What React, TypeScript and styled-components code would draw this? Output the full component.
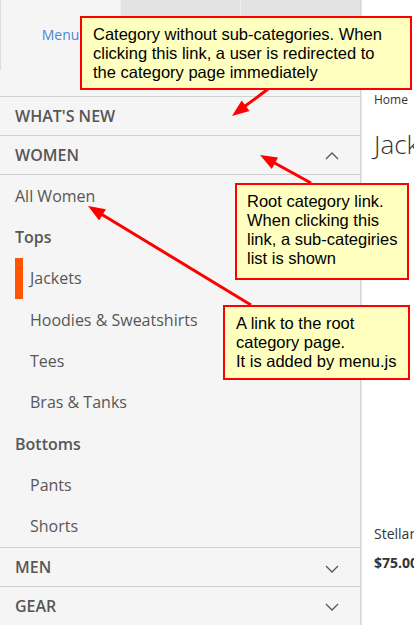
import React from "react";
import styled, { createGlobalStyle } from "styled-components";

const GlobalStyle = createGlobalStyle`
  html, body { margin: 0; padding: 0; background: #ffffff; }
  body { font-family: "Open Sans", "Noto Sans", sans-serif; overflow: hidden; }
  * { box-sizing: border-box; }
`;

const Page = styled.div`
  position: relative;
  width: 414px;
  height: 625px;
  overflow: hidden;
  display: flex;
  background: #ffffff;
`;

const NavPanel = styled.aside`
  width: 361px;
  flex: none;
  display: flex;
  flex-direction: column;
  background: #f5f5f5;
  border-right: 1px solid #d4d4d4;
  box-shadow: 1px 0 1px rgba(0, 0, 0, 0.08);
  color: #575757;
  position: relative;
  z-index: 1;
`;

const Tabs = styled.div`
  display: grid;
  grid-template-columns: 120px 120px 120px;
  height: 70px;
`;

const Tab = styled.div<{ $active?: boolean }>`
  display: flex;
  align-items: center;
  justify-content: center;
  font-size: 14px;
  color: ${(p) => (p.$active ? "#4a86d6" : "#575757")};
  background: ${(p) => (p.$active ? "#f5f5f5" : "#e3e3e3")};
  border-left: 1px solid ${(p) => (p.$active ? "#dcdcdc" : "#f0f0f0")};
`;

const TabGap = styled.div`
  height: 26px;
`;

const NavRow = styled.div`
  height: 39px;
  border-top: 1px solid #d1d1d1;
  display: flex;
  align-items: center;
  justify-content: space-between;
  padding: 0 21px 0 15px;
  font-size: 16px;
  font-weight: 600;
  text-transform: uppercase;
  color: #575757;
`;

const SubList = styled.ul`
  list-style: none;
  margin: 0;
  padding: 0;
  border-top: 1px solid #d1d1d1;
`;

const SubItem = styled.li<{ $child?: boolean; $bold?: boolean; $active?: boolean }>`
  height: 41.35px;
  display: flex;
  align-items: center;
  font-size: 16px;
  font-weight: ${(p) => (p.$bold ? 600 : 400)};
  color: #575757;
  padding-left: ${(p) => (p.$active ? "7px" : p.$child ? "30px" : "15px")};
  margin-left: ${(p) => (p.$active ? "15px" : "0")};
  border-left: ${(p) => (p.$active ? "8px solid #ff5501" : "none")};
`;

const Content = styled.main`
  flex: 1;
  padding: 91px 0 0 13px;
  display: flex;
  flex-direction: column;
  white-space: nowrap;
  color: #333333;
`;

const Breadcrumb = styled.div`
  font-size: 12px;
  line-height: 18px;
`;

const PageTitle = styled.h1`
  margin: 19px 0 0;
  font-size: 26px;
  line-height: 32px;
  font-weight: 300;
  color: #333333;
`;

const ProductImage = styled.div`
  height: 364px;
`;

const ProductName = styled.div`
  font-size: 14px;
  line-height: 20px;
`;

const Price = styled.div`
  margin-top: 9px;
  font-size: 14px;
  line-height: 20px;
  font-weight: 700;
`;

const Note = styled.div<{ $x: number; $y: number; $w: number; $h: number; $pl: number }>`
  position: absolute;
  left: ${(p) => p.$x}px;
  top: ${(p) => p.$y}px;
  width: ${(p) => p.$w}px;
  height: ${(p) => p.$h}px;
  padding: 7px 0 0 ${(p) => p.$pl}px;
  background: #ffffc0;
  border: 2px solid #ff0000;
  font-family: "Liberation Sans", Arial, sans-serif;
  font-size: 16.5px;
  line-height: 19px;
  color: #000000;
  white-space: nowrap;
  z-index: 3;
`;

const Arrows = styled.svg`
  position: absolute;
  left: 0;
  top: 0;
  z-index: 2;
  pointer-events: none;
`;

const Chevron = ({ up }: { up?: boolean }) => (
  <svg width="14" height="8" viewBox="0 0 14 8" style={{ marginTop: 3 }}>
    <polyline
      points={up ? "1,7 7,1 13,7" : "1,1 7,7 13,1"}
      fill="none"
      stroke="#575757"
      strokeWidth="1.3"
    />
  </svg>
);

type Pt = [number, number];
const arrowHead = (from: Pt, tip: Pt, len = 17, half = 6.5): string => {
  const dx = tip[0] - from[0];
  const dy = tip[1] - from[1];
  const d = Math.hypot(dx, dy);
  const ux = dx / d;
  const uy = dy / d;
  const bx = tip[0] - ux * len;
  const by = tip[1] - uy * len;
  const px = -uy;
  const py = ux;
  return `${tip[0]},${tip[1]} ${bx + px * half},${by + py * half} ${bx - px * half},${by - py * half}`;
};

const arrows: { from: Pt; tip: Pt }[] = [
  { from: [268, 89], tip: [232, 116] },
  { from: [311, 183], tip: [260, 155] },
  { from: [251, 305], tip: [88, 206] },
];

export default function App() {
  return (
    <>
      <GlobalStyle />
      <Page>
        <NavPanel>
          <Tabs>
            <Tab $active>Menu</Tab>
            <Tab />
            <Tab />
          </Tabs>
          <TabGap />
          <NavRow>What's New</NavRow>
          <NavRow>
            Women
            <Chevron up />
          </NavRow>
          <SubList>
            <SubItem>All Women</SubItem>
            <SubItem $bold>Tops</SubItem>
            <SubItem $child $active>Jackets</SubItem>
            <SubItem $child>Hoodies &amp; Sweatshirts</SubItem>
            <SubItem $child>Tees</SubItem>
            <SubItem $child>Bras &amp; Tanks</SubItem>
            <SubItem $bold>Bottoms</SubItem>
            <SubItem $child>Pants</SubItem>
            <SubItem $child>Shorts</SubItem>
          </SubList>
          <NavRow>
            Men
            <Chevron />
          </NavRow>
          <NavRow>
            Gear
            <Chevron />
          </NavRow>
        </NavPanel>
        <Content>
          <Breadcrumb>Home</Breadcrumb>
          <PageTitle>Jackets</PageTitle>
          <ProductImage />
          <ProductName>Stellar Solar Jacket</ProductName>
          <Price>$75.00</Price>
        </Content>

        <Arrows width="414" height="625" viewBox="0 0 414 625">
          {arrows.map((a, i) => {
            const dx = a.tip[0] - a.from[0];
            const dy = a.tip[1] - a.from[1];
            const d = Math.hypot(dx, dy);
            const ex = a.tip[0] - (dx / d) * 12;
            const ey = a.tip[1] - (dy / d) * 12;
            return (
              <g key={i}>
                <line x1={a.from[0]} y1={a.from[1]} x2={ex} y2={ey} stroke="#ff0000" strokeWidth="3" />
                <polygon points={arrowHead(a.from, a.tip)} fill="#ff0000" />
              </g>
            );
          })}
        </Arrows>

        <Note $x={80} $y={16} $w={332} $h={74} $pl={11}>
          Category without sub-categories. When
          <br />
          clicking this link, a user is redirected to
          <br />
          the category page immediately
        </Note>
        <Note $x={235} $y={183} $w={174} $h={97} $pl={10}>
          Root category link.
          <br />
          When clicking this
          <br />
          link, a sub-categiries
          <br />
          list is shown
        </Note>
        <Note $x={223} $y={305} $w={187} $h={75} $pl={11}>
          A link to the root
          <br />
          category page.
          <br />
          It is added by menu.js
        </Note>
      </Page>
    </>
  );
}
